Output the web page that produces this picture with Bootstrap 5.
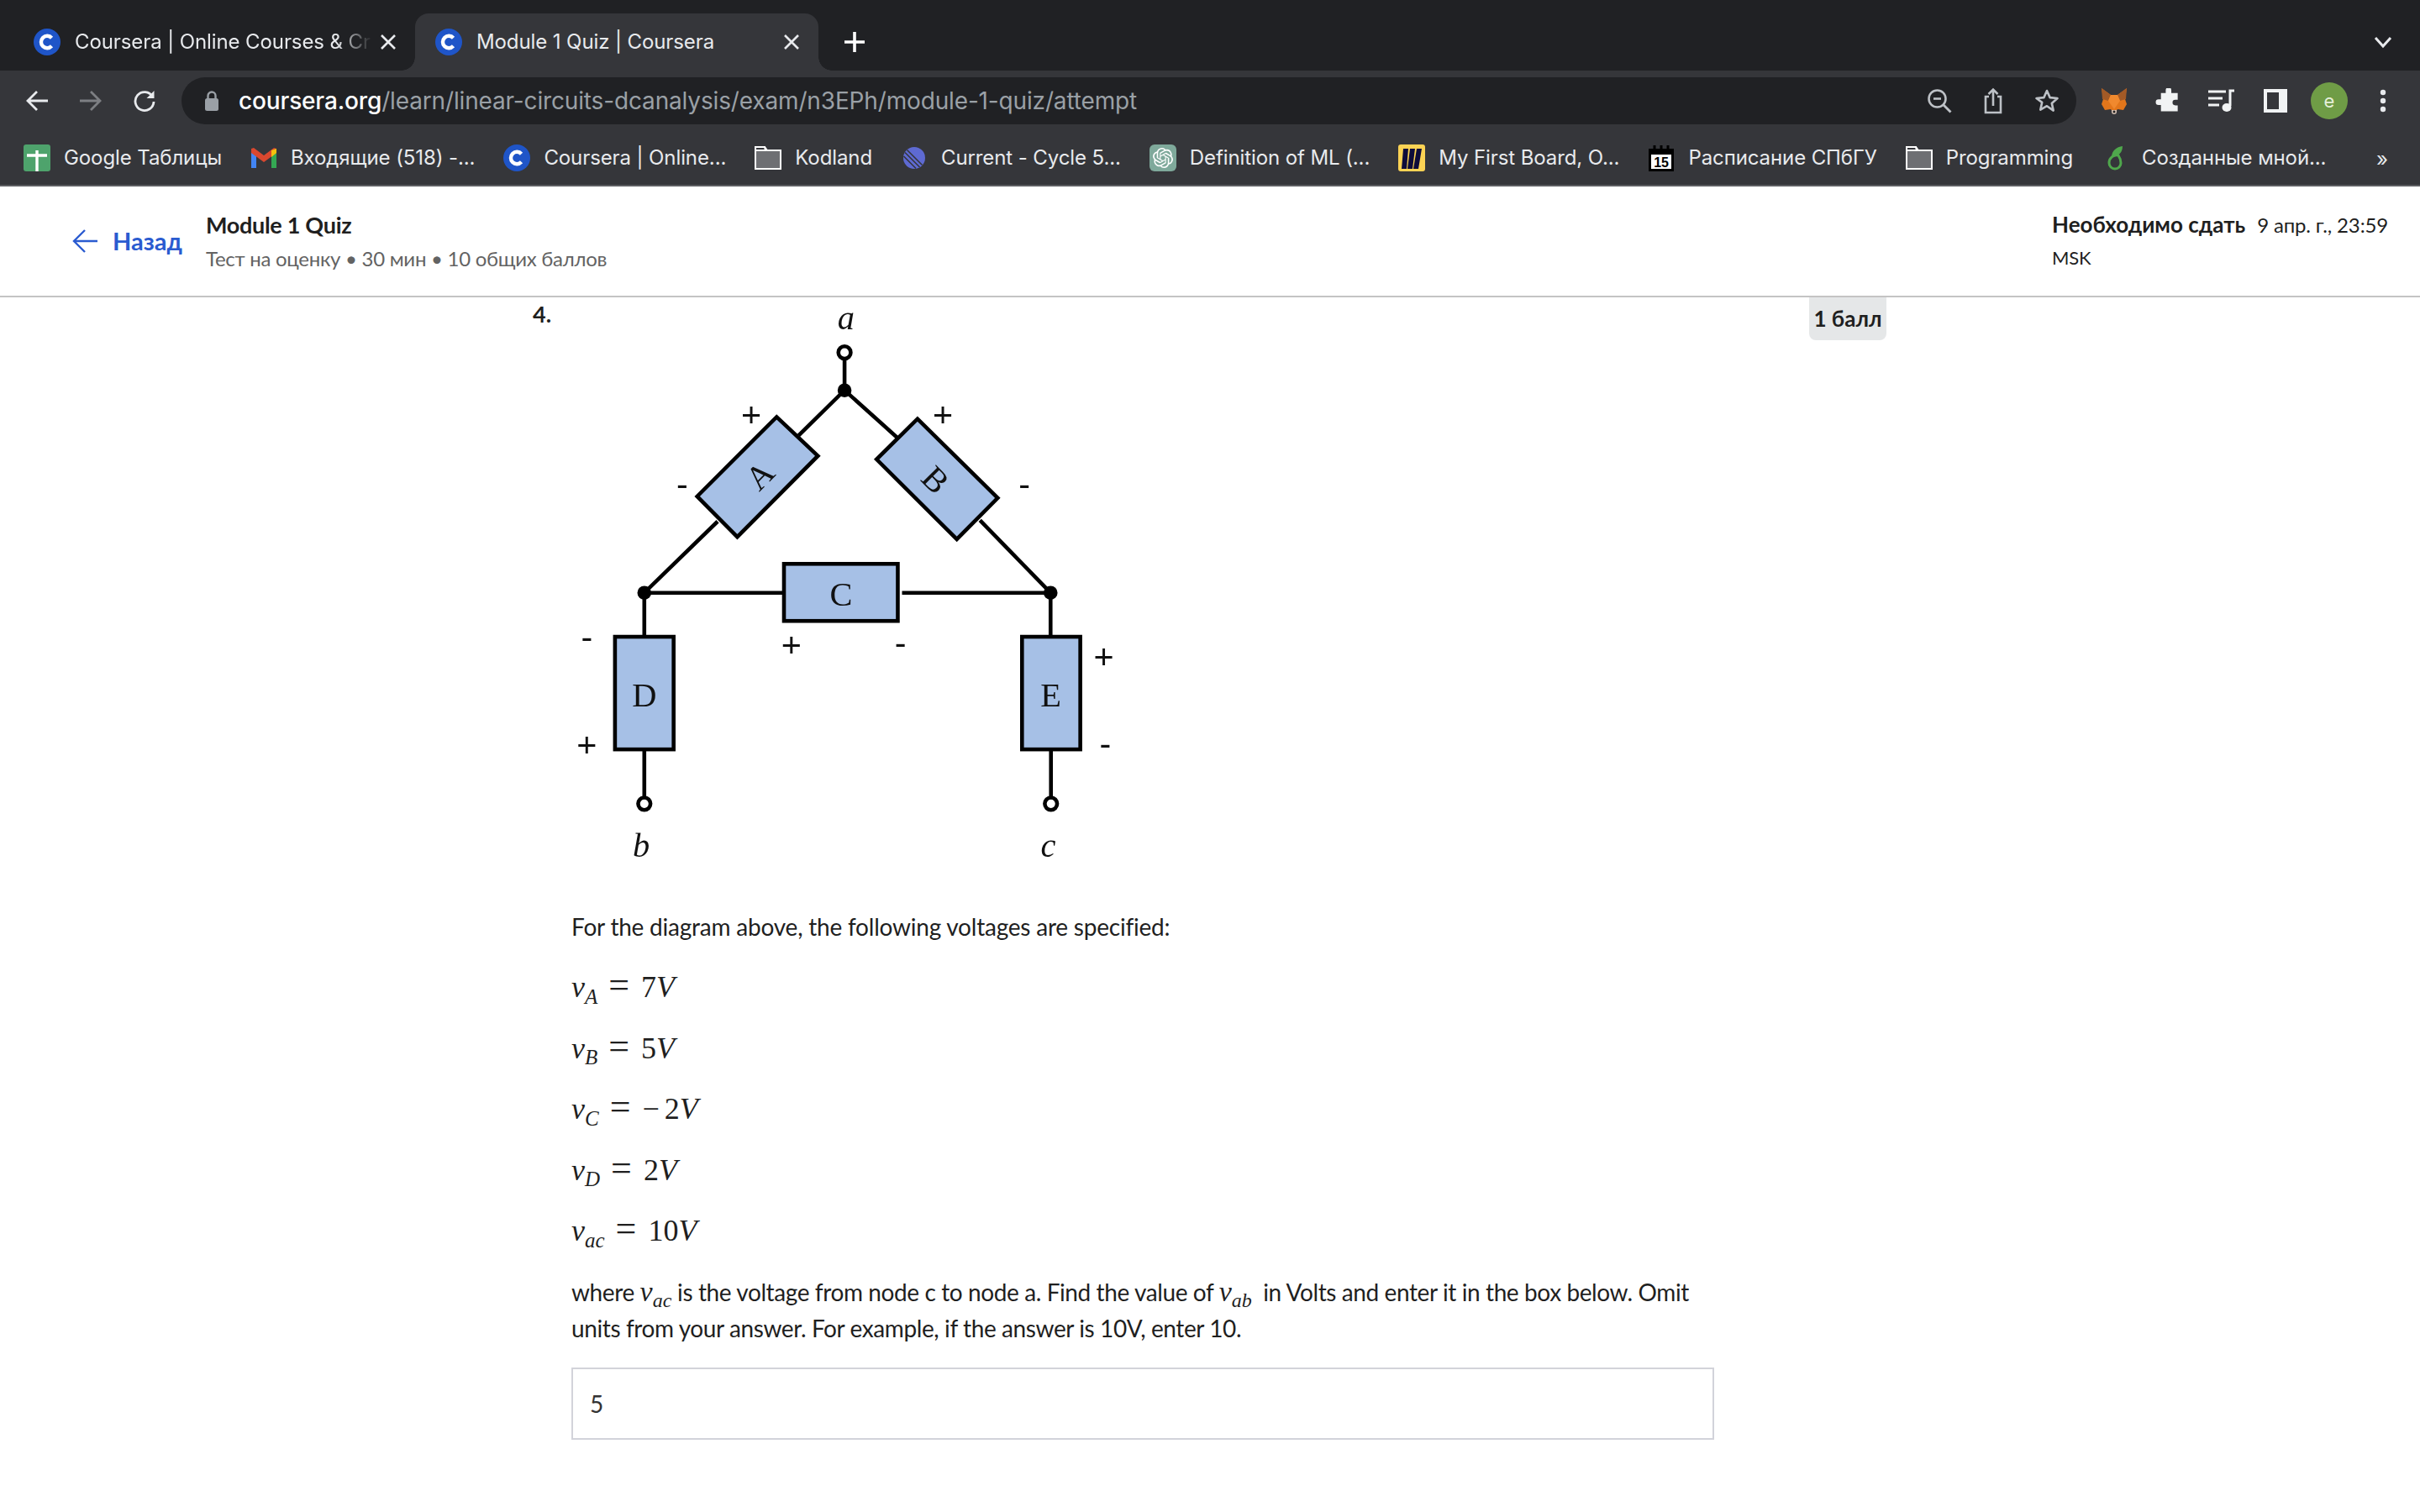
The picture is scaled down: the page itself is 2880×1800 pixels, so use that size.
<!DOCTYPE html>
<html lang="ru">
<head>
<meta charset="UTF-8">
<title>Module 1 Quiz | Coursera</title>
<link href="https://cdn.jsdelivr.net/npm/bootstrap@5.3.3/dist/css/bootstrap.min.css" rel="stylesheet">
<style>
  html, body { height: 1800px; overflow: hidden; background: #fff; }
  body { font-family: "Lato", "Noto Sans", sans-serif; color: #1f1f1f; }

  /* browser chrome */
  .chrome-ui { font-family: "Inter", "Noto Sans", sans-serif; color: #e8eaed; }
  .tab-strip { height: 84px; background: #202124; padding: 16px 0 0 16px; }
  .tab-item { width: 478px; height: 68px; padding: 0 21px 0 24px; font-size: 24px; position: relative; }
  .tab-item.tab-on { width: 480px; background: #35363a; border-radius: 16px 16px 0 0; }
  .tab-item.tab-on::before, .tab-item.tab-on::after { content: ""; position: absolute; bottom: 0; width: 16px; height: 16px; }
  .tab-item.tab-on::before { left: -16px; background: radial-gradient(circle at 0 0, #202124 15.5px, #35363a 16px); }
  .tab-item.tab-on::after { right: -16px; background: radial-gradient(circle at 100% 0, #202124 15.5px, #35363a 16px); }
  .tab-label { flex: 1; margin-left: 17px; white-space: nowrap; overflow: hidden; letter-spacing: -.1px; }
  .tab-fade { -webkit-mask-image: linear-gradient(90deg, #000 88%, transparent 100%); mask-image: linear-gradient(90deg, #000 88%, transparent 100%); }
  .tab-x { width: 22px; height: 22px; flex: none; }
  .tab-plus { margin-left: 30px; }
  .tab-chevron { margin-left: auto; margin-right: 32px; }
  .tool-strip { height: 138px; background: #35363a; border-bottom: 2px solid #5c5d61; padding-top: 8px; }
  .nav-row { height: 56px; padding: 0 12px; }
  .nav-btn { width: 64px; height: 56px; flex: none; }
  .omni-box { flex: 1; height: 56px; margin: 0 13px 0 12px; padding: 0 3px 0 24px; border-radius: 28px; background: #202124; }
  .omni-url { font-size: 28px; letter-spacing: -.15px; margin-left: 20px; color: #9aa0a6; white-space: nowrap; flex: 1; }
  .omni-url b { color: #fff; font-weight: 500; }
  .user-dot { width: 44px; height: 44px; border-radius: 50%; background: #6f9c46; color: #e6f0da; font-size: 22px; }
  .mark-row { height: 72px; padding: 8px 0 0 28px; font-size: 24px; letter-spacing: -.1px; position: relative; }
  .mark-item { margin-right: 34px; white-space: nowrap; }
  .mark-item svg { width: 32px; height: 32px; margin-right: 16px; flex: none; }
  .mark-more { position: absolute; right: 38px; top: 24px; font-size: 24px; }

  /* page header */
  .quiz-head { height: 132px; border-bottom: 2px solid #c4c4c4; padding: 0 44px 0 86px; }
  .back-link { color: #2a5bd0; font-weight: 700; font-size: 29px; text-decoration: none; width: 159px; }
  .back-link svg { margin-right: 18px; }
  .quiz-title { font-size: 27px; letter-spacing: -.3px; font-weight: 700; line-height: 40px; margin-top: 1px; }
  .quiz-sub { font-size: 24px; letter-spacing: -.28px; line-height: 40px; color: #636363; }
  .due-box { width: 394px; font-size: 24px; letter-spacing: -.15px; line-height: 39px; white-space: nowrap; }
  .due-box strong { font-size: 26px; letter-spacing: 0; font-weight: 700; margin-right: 14px; }
  .due-zone { font-size: 22px; }

  /* question */
  .q-wrap { padding-left: 634px; }
  .q-num { width: 46px; font-size: 27px; font-weight: 700; line-height: 40px; }
  .q-body { width: 1360px; }
  .q-body p { font-size: 28px; letter-spacing: -.22px; line-height: 43px; margin: 0; }
  .q-pic { display: block; width: 652px; height: 680px; filter: blur(.35px); }
  .pic-serif { font-family: "Liberation Serif", serif; }
  .pic-sans { font-family: "Liberation Sans", sans-serif; }
  .q-intro { margin-top: 48px !important; margin-bottom: 14px !important; }
  .tex-line { height: 72.5px; font-family: "Liberation Serif", serif; font-size: 36px; line-height: 72.5px; white-space: nowrap; }
  .tex-var { font-style: italic; }
  .tex-var sub { font-size: 25px; bottom: -.3em; }
  .tex-eq { font-size: 44px; margin: 0 14px 0 13px; line-height: 0; }
  .tex-minus { margin-right: 6px; }
  .tex-inline { font-family: "Liberation Serif", serif; font-size: 34px; letter-spacing: 0; }
  .tex-inline sub { font-size: 24px; bottom: -.3em; }
  .q-body p.q-ask { margin-top: 14px; letter-spacing: -.4px; }
  .q-answer { width: 1360px; height: 86px; margin-top: 25px; border: 2px solid #d2d3da; border-radius: 0; padding: 0 20px; font-size: 28px; color: #333; font-family: inherit; }
  .pts-tag { width: 92px; height: 51px; margin-left: 113px; background: #e5e7e8; border-radius: 0 0 8px 8px; font-size: 26px; font-weight: 700; }
</style>
</head>
<body>

<svg width="0" height="0" class="position-absolute">
  <symbol id="ic-coursera" viewBox="0 0 32 32">
    <circle cx="16" cy="16" r="16" fill="#1f55c8"/>
    <path d="M21.500 11.200a7.200 7.200 0 1 0 0 9.600" fill="none" stroke="#fff" stroke-width="4.400"/>
  </symbol>
  <symbol id="ic-folder" viewBox="0 0 32 32">
    <path d="M1 3h11l3 4h16v22H1z" fill="#6e6f73" stroke="#fff" stroke-width="2"/>
    <path d="M1 3h11l1 4H1z" fill="#35363a" stroke="#fff" stroke-width="2"/>
  </symbol>
</svg>

<div class="chrome-ui">
  <div class="tab-strip d-flex align-items-center">
    <div class="tab-item d-flex align-items-center">
      <svg width="32" height="32"><use href="#ic-coursera"/></svg>
      <span class="tab-label tab-fade">Coursera | Online Courses &amp; Cr</span>
      <svg class="tab-x ms-2" viewBox="0 0 22 22"><path d="M3 3l16 16M19 3L3 19" stroke="#e8eaed" stroke-width="2.600"/></svg>
    </div>
    <div class="tab-item tab-on d-flex align-items-center">
      <svg width="32" height="32"><use href="#ic-coursera"/></svg>
      <span class="tab-label">Module 1 Quiz | Coursera</span>
      <svg class="tab-x ms-2" viewBox="0 0 22 22"><path d="M3 3l16 16M19 3L3 19" stroke="#e8eaed" stroke-width="2.600"/></svg>
    </div>
    <svg class="tab-plus" width="26" height="26" viewBox="0 0 26 26"><path d="M13 1v24M1 13h24" stroke="#fff" stroke-width="3.600"/></svg>
    <svg class="tab-chevron" width="24" height="24" viewBox="0 0 24 24"><path d="M3 7l9 10 9-10" fill="none" stroke="#e8eaed" stroke-width="3"/></svg>
  </div>

  <div class="tool-strip">
    <div class="nav-row d-flex align-items-center">
      <div class="nav-btn d-flex align-items-center justify-content-center">
        <svg width="28" height="28" viewBox="0 0 28 28"><path d="M27 14H3M14 3L3 14l11 11" fill="none" stroke="#e8eaed" stroke-width="2.800"/></svg>
      </div>
      <div class="nav-btn d-flex align-items-center justify-content-center">
        <svg width="28" height="28" viewBox="0 0 28 28"><path d="M1 14h24M14 3l11 11-11 11" fill="none" stroke="#7d7f83" stroke-width="2.800"/></svg>
      </div>
      <div class="nav-btn d-flex align-items-center justify-content-center">
        <svg width="28" height="28" viewBox="0 0 28 28"><path d="M23.500 9A11 11 0 1 0 25 15" fill="none" stroke="#e8eaed" stroke-width="2.800"/><path d="M25.500 2v9h-9z" fill="#e8eaed"/></svg>
      </div>
      <div class="omni-box d-flex align-items-center">
        <svg width="24" height="26" viewBox="0 0 24 26"><path d="M7.500 11V7a4.500 4.500 0 0 1 9 0v4" fill="none" stroke="#9aa0a6" stroke-width="2.400"/><rect x="4" y="10" width="16" height="15" rx="2.500" fill="#9aa0a6"/></svg>
        <span class="omni-url"><b>coursera.org</b>/learn/linear-circuits-dcanalysis/exam/n3EPh/module-1-quiz/attempt</span>
        <div class="nav-btn d-flex align-items-center justify-content-center">
          <svg width="30" height="30" viewBox="0 0 30 30"><circle cx="12.500" cy="12.500" r="10" fill="none" stroke="#bdc1c6" stroke-width="2.600"/><path d="M20 20l8.500 8.500" stroke="#bdc1c6" stroke-width="2.800"/><path d="M8 12.500h9" stroke="#bdc1c6" stroke-width="2.600"/></svg>
        </div>
        <div class="nav-btn d-flex align-items-center justify-content-center">
          <svg width="24" height="32" viewBox="0 0 24 32"><path d="M7 11H3v19h18V11h-4" fill="none" stroke="#bdc1c6" stroke-width="2.600"/><path d="M12 22V3M6.500 8L12 2.500 17.500 8" fill="none" stroke="#bdc1c6" stroke-width="2.600"/></svg>
        </div>
        <div class="nav-btn d-flex align-items-center justify-content-center">
          <svg width="30" height="30" viewBox="0 0 30 30"><path d="M15 3l3.600 8.100 8.900.9-6.700 5.900 1.900 8.700L15 21.200l-7.700 4.400 1.900-8.700L2.500 12l8.900-.9z" fill="none" stroke="#bdc1c6" stroke-width="2.600" stroke-linejoin="round"/></svg>
        </div>
      </div>
      <div class="nav-btn d-flex align-items-center justify-content-center">
        <svg width="32" height="32" viewBox="0 0 32 32"><path d="M1 1l11 8h8l11-8-2 13 2 6-4 7-7-1-2 3h-4l-2-3-7 1-4-7 2-6z" fill="#e2761b"/><path d="M1 1l11 8-3 7-7-2zM31 1L20 9l3 7 7-2z" fill="#a35a26"/><path d="M12 9h8l3 7-7 10-7-10z" fill="#f0892e"/><path d="M13 27h6v2a3 3 0 0 1-6 0z" fill="#d7c1b3"/><circle cx="16" cy="29" r="1.500" fill="#222"/></svg>
      </div>
      <div class="nav-btn d-flex align-items-center justify-content-center">
        <svg width="30" height="30" viewBox="0 0 30 30"><path d="M12 2.500a3.500 3.500 0 0 1 7 0V6h8v8.500h-3a3.500 3.500 0 0 0 0 7h3V29H6v-8H3a3.500 3.500 0 0 1 0-7h3V6h6z" fill="#f1f3f4" transform="translate(1 0) scale(.95)"/></svg>
      </div>
      <div class="nav-btn d-flex align-items-center justify-content-center">
        <svg width="32" height="28" viewBox="0 0 32 28"><path d="M0 3h21M0 11h17M0 19h13" stroke="#f1f3f4" stroke-width="3"/><path d="M26 20V2h5" fill="none" stroke="#f1f3f4" stroke-width="3"/><ellipse cx="22" cy="22" rx="5.500" ry="5" fill="#f1f3f4"/></svg>
      </div>
      <div class="nav-btn d-flex align-items-center justify-content-center">
        <svg width="28" height="28" viewBox="0 0 28 28"><rect width="28" height="28" fill="#f1f3f4"/><rect x="4" y="4" width="14" height="20" fill="#35363a"/></svg>
      </div>
      <div class="nav-btn d-flex align-items-center justify-content-center">
        <div class="user-dot d-flex align-items-center justify-content-center">e</div>
      </div>
      <div class="nav-btn d-flex align-items-center justify-content-center">
        <svg width="8" height="28" viewBox="0 0 8 28"><circle cx="4" cy="4" r="3.200" fill="#e8eaed"/><circle cx="4" cy="14" r="3.200" fill="#e8eaed"/><circle cx="4" cy="24" r="3.200" fill="#e8eaed"/></svg>
      </div>
    </div>

    <div class="mark-row d-flex align-items-center">
      <div class="mark-item d-flex align-items-center">
        <svg viewBox="0 0 32 32"><rect width="32" height="32" rx="3" fill="#4ea36c"/><path d="M16 7v25M4 13h24" stroke="#fff" stroke-width="3.400"/></svg>Google Таблицы
      </div>
      <div class="mark-item d-flex align-items-center">
        <svg viewBox="0 0 32 32"><path d="M1 8v20h6V14z" fill="#4285f4"/><path d="M25 14v14h6V8z" fill="#34a853"/><path d="M1 5v5l15 11 15-11V5l-3-1-12 9L4 4z" fill="#d9482f"/><path d="M25 7l6-2v5l-6 5z" fill="#f4c20d"/></svg>Входящие (518) -...
      </div>
      <div class="mark-item d-flex align-items-center">
        <svg><use href="#ic-coursera"/></svg>Coursera | Online...
      </div>
      <div class="mark-item d-flex align-items-center">
        <svg><use href="#ic-folder"/></svg>Kodland
      </div>
      <div class="mark-item d-flex align-items-center">
        <svg viewBox="0 0 32 32"><circle cx="16" cy="16" r="13" fill="#5e6ad2"/><path d="M3.500 14L18 28.500M5 9.500L22.500 27M7.500 6.500L25.500 24.500" stroke="#35363a" stroke-width="1.600"/></svg>Current - Cycle 5...
      </div>
      <div class="mark-item d-flex align-items-center">
        <svg viewBox="0 0 32 32"><rect width="32" height="32" rx="6" fill="#7fa99b"/><g transform="translate(4 4)"><path fill="#fff" d="M22.2819 9.8211a5.9847 5.9847 0 0 0-.5157-4.9108 6.0462 6.0462 0 0 0-6.5098-2.9A6.0651 6.0651 0 0 0 4.9807 4.1818a5.9847 5.9847 0 0 0-3.9977 2.9 6.0462 6.0462 0 0 0 .7427 7.0966 5.98 5.98 0 0 0 .511 4.9107 6.051 6.051 0 0 0 6.5146 2.9001A5.9847 5.9847 0 0 0 13.2599 24a6.0557 6.0557 0 0 0 5.7718-4.2058 5.9894 5.9894 0 0 0 3.9977-2.9001 6.0557 6.0557 0 0 0-.7475-7.0729zm-9.022 12.6081a4.4755 4.4755 0 0 1-2.8764-1.0408l.1419-.0804 4.7783-2.7582a.7948.7948 0 0 0 .3927-.6813v-6.7369l2.02 1.1686a.071.071 0 0 1 .038.052v5.5826a4.504 4.504 0 0 1-4.4945 4.4944zm-9.6607-4.1254a4.4708 4.4708 0 0 1-.5346-3.0137l.142.0852 4.783 2.7582a.7712.7712 0 0 0 .7806 0l5.8428-3.3685v2.3324a.0804.0804 0 0 1-.0332.0615L9.74 19.9502a4.4992 4.4992 0 0 1-6.1408-1.6464zM2.3408 7.8956a4.485 4.485 0 0 1 2.3655-1.9728V11.6a.7664.7664 0 0 0 .3879.6765l5.8144 3.3543-2.0201 1.1685a.0757.0757 0 0 1-.071 0l-4.8303-2.7865A4.504 4.504 0 0 1 2.3408 7.872zm16.5963 3.8558L13.1038 8.364 15.1192 7.2a.0757.0757 0 0 1 .071 0l4.8303 2.7913a4.4944 4.4944 0 0 1-.6765 8.1042v-5.6772a.79.79 0 0 0-.407-.667zm2.0107-3.0231l-.142-.0852-4.7735-2.7818a.7759.7759 0 0 0-.7854 0L9.409 9.2297V6.8974a.0662.0662 0 0 1 .0284-.0615l4.8303-2.7866a4.4992 4.4992 0 0 1 6.6802 4.66zM8.3065 12.863l-2.02-1.1638a.0804.0804 0 0 1-.038-.0567V6.0742a4.4992 4.4992 0 0 1 7.3757-3.4537l-.142.0805L8.704 5.459a.7948.7948 0 0 0-.3927.6813zm1.0976-2.3654l2.602-1.4998 2.6069 1.4998v2.9994l-2.5974 1.4997-2.6067-1.4997Z"/></g></svg>Definition of ML (...
      </div>
      <div class="mark-item d-flex align-items-center">
        <svg viewBox="0 0 32 32"><rect width="32" height="32" rx="3" fill="#fcd354"/><path d="M6 5h6l-2 24H4zM14 5h6l-3 24h-6zM22 5h6l-4 24h-6z" fill="#0e0b3a"/></svg>My First Board, O...
      </div>
      <div class="mark-item d-flex align-items-center">
        <svg viewBox="0 0 32 32"><rect x="1" y="5" width="30" height="27" fill="#000"/><path d="M8 1v7M16 1v7M24 1v7" stroke="#000" stroke-width="3"/><rect x="4" y="12" width="24" height="17" fill="#fff"/><text x="16" y="27" text-anchor="middle" font-family="Liberation Sans, sans-serif" font-size="16" font-weight="700" fill="#000">15</text></svg>Расписание СПбГУ
      </div>
      <div class="mark-item d-flex align-items-center">
        <svg><use href="#ic-folder"/></svg>Programming
      </div>
      <div class="mark-item d-flex align-items-center">
        <svg viewBox="0 0 32 32"><path d="M20 13c-6-1-11 3-11 9a7 7 0 0 0 14 0c0-3-1-6-3-9z" fill="none" stroke="#4fa84c" stroke-width="3"/><path d="M12 15C12 7 18 3 25 2c0 7-4 12-13 13z" fill="#4fa84c"/></svg>Созданные мной...
      </div>
      <span class="mark-more">»</span>
    </div>
  </div>
</div>

<header class="quiz-head d-flex align-items-center">
  <a class="back-link d-flex align-items-center" href="#">
    <svg width="30" height="30" viewBox="0 0 30 30"><path d="M30 15H2M15 2L2 15l13 13" fill="none" stroke="#2a5bd0" stroke-width="2.400"/></svg>Назад
  </a>
  <div>
    <div class="quiz-title">Module 1 Quiz</div>
    <div class="quiz-sub">Тест на оценку • 30 мин • 10 общих баллов</div>
  </div>
  <div class="due-box ms-auto">
    <div><strong>Необходимо сдать</strong>9 апр. г., 23:59</div>
    <div class="due-zone">MSK</div>
  </div>
</header>

<main class="q-wrap d-flex align-items-start">
  <div class="q-num">4.</div>
  <div class="q-body">
    <svg class="q-pic" viewBox="131 27 1420 1481" role="img" aria-label="Схема цепи">
      <g stroke="#000" stroke-width="10" fill="none">
        <path d="M839 170V268L720 385M510 608L320 793V907M839 268L975 390M1190 605L1373 793V907M320 793H680M988 793H1373M320 1199V1322M1374 1199V1322"/>
      </g>
      <g fill="#a6c0e6" stroke="#000" stroke-width="10" stroke-linejoin="miter">
        <polygon points="663,337 770,438 561,648 457,543"/>
        <polygon points="1028,342 1236,547 1130,654 922,447"/>
        <rect x="682" y="718" width="295" height="148"/>
        <rect x="244" y="907" width="152" height="292"/>
        <rect x="1299" y="907" width="151" height="292"/>
      </g>
      <g fill="#000">
        <circle cx="839" cy="268" r="18"/><circle cx="320" cy="793" r="18"/><circle cx="1373" cy="793" r="18"/>
      </g>
      <g fill="#fff" stroke="#000" stroke-width="10">
        <circle cx="839" cy="170" r="16"/><circle cx="320" cy="1340" r="16"/><circle cx="1374" cy="1340" r="16"/>
      </g>
      <g class="pic-serif" font-size="88" text-anchor="middle" fill="#111">
        <text transform="translate(640 510) rotate(-45)">A</text>
        <text transform="translate(1054 521) rotate(45)">B</text>
        <text x="830" y="827">C</text>
        <text x="320" y="1087">D</text>
        <text x="1374" y="1087">E</text>
        <text x="843" y="110" font-style="italic">a</text>
        <text x="312" y="1477" font-style="italic">b</text>
        <text x="1367" y="1477" font-style="italic">c</text>
      </g>
      <g class="pic-sans" font-size="90" text-anchor="middle" fill="#111">
        <text x="597" y="362">+</text><text x="1094" y="362">+</text><text x="701" y="960">+</text>
        <text x="171" y="1218">+</text><text x="1511" y="990">+</text>
        <text x="418" y="542">-</text><text x="1305" y="542">-</text><text x="984" y="952">-</text>
        <text x="171" y="937">-</text><text x="1515" y="1214">-</text>
      </g>
    </svg>

    <p class="q-intro">For the diagram above, the following voltages are specified:</p>

    <div class="tex-line"><span class="tex-var">v<sub>A</sub></span><span class="tex-eq">=</span>7<span class="tex-var">V</span></div>
    <div class="tex-line"><span class="tex-var">v<sub>B</sub></span><span class="tex-eq">=</span>5<span class="tex-var">V</span></div>
    <div class="tex-line"><span class="tex-var">v<sub>C</sub></span><span class="tex-eq">=</span><span class="tex-minus">−</span>2<span class="tex-var">V</span></div>
    <div class="tex-line"><span class="tex-var">v<sub>D</sub></span><span class="tex-eq">=</span>2<span class="tex-var">V</span></div>
    <div class="tex-line"><span class="tex-var">v<sub>ac</sub></span><span class="tex-eq">=</span>10<span class="tex-var">V</span></div>

    <p class="q-ask">where <span class="tex-inline tex-var">v<sub>ac</sub></span> is the voltage from node c to node a. Find the value of <span class="tex-inline tex-var">v<sub>ab</sub></span>&nbsp; in Volts and enter it in the box below. Omit units from your answer. For example, if the answer is 10V, enter 10.</p>

    <input class="form-control q-answer" type="text" value="5" aria-label="Ответ">
  </div>
  <div class="pts-tag d-flex align-items-center justify-content-center">1 балл</div>
</main>

<script src="https://cdn.jsdelivr.net/npm/bootstrap@5.3.3/dist/js/bootstrap.bundle.min.js"></script>
</body>
</html>
